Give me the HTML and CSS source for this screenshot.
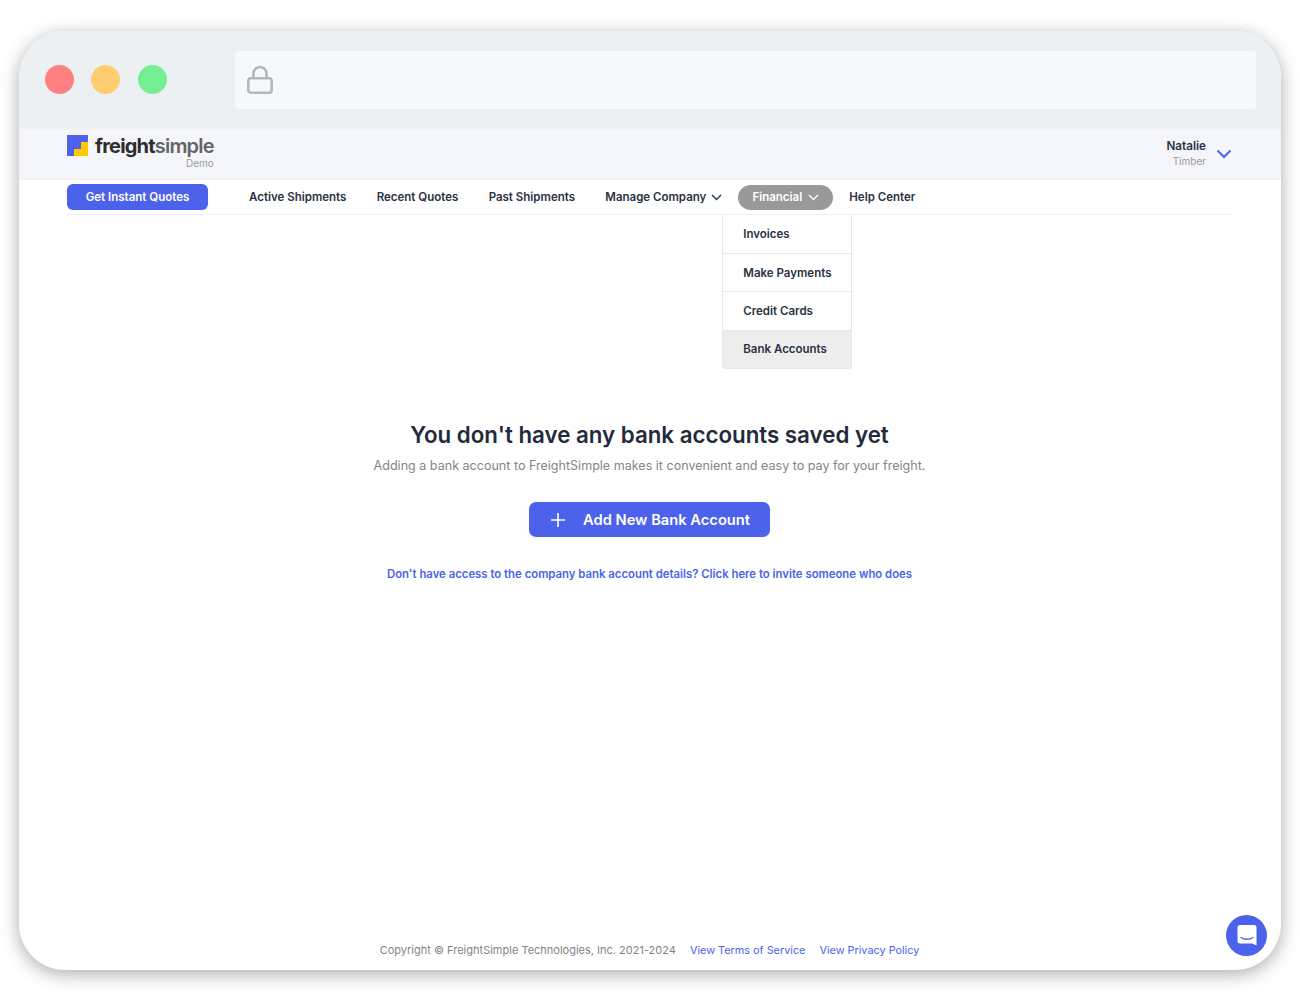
FILE: index.html
```html
<!DOCTYPE html>
<html lang="en">
<head>
    <meta charset="UTF-8">
    <meta name="viewport" content="width=device-width, initial-scale=1.0">
    <title>FreightSimple - Bank Accounts</title>
    <link rel="stylesheet" href="styles.css">
</head>
<body>
    <div class="window">
        <div class="browser-bar">
            <div class="dots">
                <span class="dot dot-red"></span>
                <span class="dot dot-yellow"></span>
                <span class="dot dot-green"></span>
            </div>
            <div class="address-bar">
                <svg class="lock" width="28" height="30" viewBox="0 0 28 30" fill="none" stroke="#b5b7b9" stroke-width="2.6">
                    <rect x="2.3" y="13.3" width="23.4" height="14.4" rx="2.6"/>
                    <path d="M7.5 13V8.5a6.5 6.5 0 0 1 13 0V13"/>
                </svg>
            </div>
        </div>

        <header class="top-header">
            <div class="logo">
                <svg class="logo-mark" width="21" height="21" viewBox="0 0 21 21">
                    <rect width="21" height="21" fill="#4c62eb"/>
                    <path d="M7 21V14H14V7H21V21Z" fill="#ffc800"/>
                </svg>
                <div class="logo-text">
                    <div class="logo-name"><b>freight</b><span>simple</span></div>
                    <div class="logo-demo">Demo</div>
                </div>
            </div>
            <div class="user">
                <div class="user-text">
                    <div class="user-name">Natalie</div>
                    <div class="user-company">Timber</div>
                </div>
                <svg width="16" height="10" viewBox="0 0 16 10" fill="none" stroke="#4c62eb" stroke-width="2">
                    <path d="M1.5 1.5L8 8L14.5 1.5"/>
                </svg>
            </div>
        </header>

        <nav class="nav">
            <a class="quote-btn">Get Instant Quotes</a>
            <a class="nav-link nav-active-shipments">Active Shipments</a>
            <a class="nav-link nav-recent">Recent Quotes</a>
            <a class="nav-link nav-past">Past Shipments</a>
            <a class="nav-link nav-manage">Manage Company
                <svg width="11" height="7" viewBox="0 0 11 7" fill="none" stroke="#2a3243" stroke-width="1.4"><path d="M1 1L5.5 5.5L10 1"/></svg>
            </a>
            <div class="nav-menu">
                <a class="nav-pill">Financial
                    <svg width="11" height="7" viewBox="0 0 11 7" fill="none" stroke="#fff" stroke-width="1.4"><path d="M1 1L5.5 5.5L10 1"/></svg>
                </a>
                <div class="dropdown">
                    <a class="dropdown-item">Invoices</a>
                    <a class="dropdown-item">Make Payments</a>
                    <a class="dropdown-item">Credit Cards</a>
                    <a class="dropdown-item selected">Bank Accounts</a>
                </div>
            </div>
            <a class="nav-link nav-help">Help Center</a>
        </nav>

        <main class="content">
            <h1>You don't have any bank accounts saved yet</h1>
            <p class="subtitle">Adding a bank account to FreightSimple makes it convenient and easy to pay for your freight.</p>
            <a class="add-btn">
                <svg width="14" height="14" viewBox="0 0 14 14" stroke="#fff" stroke-width="1.6"><path d="M7 0V14M0 7H14"/></svg>
                Add New Bank Account
            </a>
            <a class="invite-link">Don't have access to the company bank account details? Click here to invite someone who does</a>
        </main>

        <footer class="footer">
            <span>Copyright © FreightSimple Technologies, Inc. 2021-2024</span>
            <a>View Terms of Service</a>
            <a>View Privacy Policy</a>
        </footer>

        <div class="chat-btn">
            <svg width="20" height="21" viewBox="0 0 20 21">
                <path d="M3 0H17A2.5 2.5 0 0 1 19.5 2.5V20.5L15.5 18.500H3A2.5 2.5 0 0 1 .5 16V2.5A2.5 2.5 0 0 1 3 0Z" fill="#fff"/>
                <path d="M4 12.5C7 14.8 13 14.8 16 12.5" fill="none" stroke="#4c62eb" stroke-width="1.3" stroke-linecap="round"/>
            </svg>
        </div>
    </div>
</body>
</html>
```

FILE: styles.css
```css
* {
    box-sizing: border-box;
}
body {
    margin: 0;
    padding: 31px 19px 30px;
    background: #fff;
    font-family: Inter, "Liberation Sans", sans-serif;
    color: #2a3243;
}
a {
    text-decoration: none;
    cursor: pointer;
}
.window {
    position: relative;
    height: 939px;
    display: flex;
    flex-direction: column;
    background: #fff;
    border-radius: 46px;
    overflow: hidden;
    box-shadow: 0 4px 18px rgba(0, 0, 0, 0.33);
}

/* browser chrome */
.browser-bar {
    height: 97px;
    flex-shrink: 0;
    display: flex;
    align-items: center;
    padding: 0 25px 0 26px;
    background: #ecf0f2;
}
.dots {
    display: flex;
    gap: 17px;
    width: 190px;
}
.dot {
    width: 29px;
    height: 29px;
    border-radius: 50%;
}
.dot-red {
    background: #ff8080;
}
.dot-yellow {
    background: #ffcd70;
}
.dot-green {
    margin-left: 1px;
    background: #75ef94;
}
.address-bar {
    flex: 1;
    height: 58px;
    display: flex;
    align-items: center;
    padding-left: 11px;
    background: #f7f8fb;
    border-radius: 4px;
}

/* top header */
.top-header {
    height: 52px;
    flex-shrink: 0;
    display: flex;
    justify-content: space-between;
    padding: 0 49px 0 48px;
    background: #f5f6fb;
    border-top: 1px solid #f0f1f6;
    border-bottom: 1px solid #eef0f5;
}
.logo {
    display: flex;
    gap: 7px;
    padding-top: 6px;
}
.logo-text {
    display: flex;
    flex-direction: column;
}
.logo-name {
    font-size: 20px;
    line-height: 22px;
    letter-spacing: -0.8px;
    color: #2d2d2f;
}
.logo-name b {
    font-weight: 700;
}
.logo-name span {
    font-weight: 600;
    color: #636466;
}
.logo-demo {
    font-size: 10px;
    line-height: 12px;
    text-align: right;
    color: #999;
}
.user {
    display: flex;
    gap: 10px;
    align-items: center;
}
.user-text {
    text-align: right;
}
.user-name {
    font-size: 11.7px;
    line-height: 15px;
    font-weight: 600;
}
.user-company {
    font-size: 10px;
    line-height: 15px;
    color: #999;
}

/* main nav */
.nav {
    position: relative;
    height: 35px;
    flex-shrink: 0;
    display: flex;
    align-items: center;
    margin: 0 49px 0 48px;
    border-bottom: 1px solid #eef0f5;
    font-size: 11.5px;
    font-weight: 600;
}
.quote-btn {
    width: 141px;
    height: 26px;
    line-height: 26px;
    text-align: center;
    color: #fff;
    background: #4c62eb;
    border-radius: 6px;
}
.nav-link {
    color: #2a3243;
    white-space: nowrap;
}
.nav-active-shipments {
    margin-left: 41px;
}
.nav-recent,
.nav-past,
.nav-manage {
    margin-left: 30.3px;
}
.nav-manage svg {
    margin-left: 2px;
}
.nav-menu {
    position: relative;
    margin: 1px 0 0 16px;
}
.nav-pill {
    display: flex;
    align-items: center;
    justify-content: center;
    gap: 6px;
    width: 95px;
    height: 25px;
    padding-bottom: 1px;
    color: #fff;
    background: #999;
    border-radius: 13px;
}
.nav-help {
    margin-left: 16px;
}
.dropdown {
    position: absolute;
    z-index: 2;
    left: -16px;
    top: 30px;
    width: 130px;
    background: #fff;
    border: 1px solid #e8e8ea;
    border-top: none;
    border-radius: 0 0 3px 3px;
}
.dropdown-item {
    display: block;
    height: 38.5px;
    line-height: 39px;
    padding-left: 20px;
    color: #2a3243;
    border-bottom: 1px solid #e8e8ea;
}
.dropdown-item.selected {
    height: 37.5px;
    line-height: 37px;
    background: #ededee;
    border-bottom: none;
}

/* empty state */
.content {
    display: flex;
    flex-direction: column;
    align-items: center;
    padding: 204px 1px 0 0;
}
h1 {
    margin: 0;
    font-size: 22.3px;
    line-height: 32px;
    font-weight: 600;
    color: #222b3c;
}
.subtitle {
    margin: 5px 0 0;
    font-size: 12.55px;
    line-height: 20px;
    color: #858585;
}
.add-btn {
    display: flex;
    align-items: center;
    gap: 18px;
    width: 241px;
    height: 35px;
    margin-top: 26px;
    padding-left: 22px;
    font-size: 14.7px;
    font-weight: 600;
    color: #fff;
    background: #4c62eb;
    border-radius: 7px;
}
.invite-link {
    margin-top: 28px;
    font-size: 11.35px;
    line-height: 18px;
    font-weight: 600;
    color: #4c62eb;
}

/* footer */
.footer {
    margin-top: auto;
    height: 30px;
    display: flex;
    justify-content: center;
    gap: 14px;
    padding-right: 1px;
    font-size: 11px;
    line-height: 20px;
    color: #858585;
}
.footer a {
    font-size: 10.85px;
    color: #4c62eb;
}
.chat-btn {
    position: absolute;
    right: 14px;
    bottom: 14px;
    width: 41px;
    height: 41px;
    display: flex;
    align-items: center;
    justify-content: center;
    background: #4c62eb;
    border-radius: 50%;
}
```
